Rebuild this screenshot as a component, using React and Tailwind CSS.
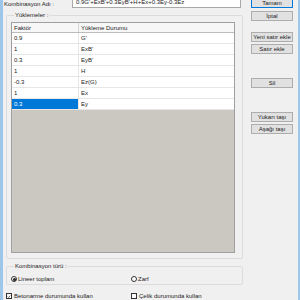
import React from "react";

const rows = [
  { f: "0.9", d: "G'" },
  { f: "1", d: "ExB'" },
  { f: "0.3", d: "EyB'" },
  { f: "1", d: "H" },
  { f: "-0.3", d: "Ez(G)" },
  { f: "1", d: "Ex" },
  { f: "0.3", d: "Ey", selected: true },
];

function Btn({ children, primary, className = "" }) {
  return (
    <div
      className={`h-[10px] w-[42px] flex items-center justify-center whitespace-nowrap bg-[#e1e1e1] border ${
        primary ? "border-[#0078d7]" : "border-[#adadad]"
      } text-[6px] leading-[7px] ${className}`}
    >
      {children}
    </div>
  );
}

function Radio({ checked, label }) {
  return (
    <div className="flex items-center gap-[1px]">
      <div className="w-[6px] h-[6px] rounded-full border border-[#333] bg-white flex items-center justify-center">
        {checked && <div className="w-[3px] h-[3px] rounded-full bg-[#222]" />}
      </div>
      <span>{label}</span>
    </div>
  );
}

function Check({ checked, label }) {
  return (
    <div className="flex items-center gap-[2px]">
      <div className="w-[6px] h-[6px] border border-[#333] bg-white flex items-center justify-center">
        {checked && (
          <svg viewBox="0 0 6 6" className="w-[5px] h-[5px]">
            <path d="M1 3 L2.5 4.5 L5 1.5" stroke="#222" strokeWidth="1" fill="none" />
          </svg>
        )}
      </div>
      <span>{label}</span>
    </div>
  );
}

export default function App() {
  return (
    <div className="w-[300px] h-[300px] overflow-hidden flex bg-[#f0f0f0] font-['Liberation_Sans',Arial,sans-serif] text-[6px] leading-[8px] text-[#222]">
      <div className="w-[3px] h-full bg-[#9cc6ea]" />
      <div className="flex-1 flex pl-[3px]">
        {/* left column */}
        <div className="w-[237px] flex flex-col mt-[-4px]">
          <div className="flex items-center h-[12px]">
            <span className="ml-[-2px] w-[68px] pt-[3px] whitespace-nowrap">Kombinasyon Adı :</span>
            <div className="w-[169px] h-[12px] bg-white border border-[#a9a9a9] flex items-end pl-[3px] pb-[1px]">
              <span className="leading-[7px] whitespace-nowrap">0.9G'+ExB'+0.3EyB'+H+Ex+0.3Ey-0.3Ez</span>
            </div>
          </div>

          <fieldset className="mt-[3px] border border-[#dcdcdc] rounded-[2px] px-[4px] pb-[5px] pr-[7px]">
            <legend className="ml-[3px] px-[1px] leading-[8px]">Yüklemeler :</legend>
            <div className="mt-[3px] h-[231px] border border-[#a0a0a0] bg-[#cbc8c1] flex flex-col">
              <div className="flex h-[10px] bg-[#f7f7f7] border-b border-[#bcbcbc]">
                <div className="w-[67px] pl-[2px] border-r border-[#d5d5d5] flex items-center">Faktör</div>
                <div className="flex-1 pl-[2px] flex items-center">Yükleme Durumu</div>
              </div>
              {rows.map((r, i) => (
                <div key={i} className="flex h-[11px] bg-white border-b border-[#e6e6e6]">
                  <div
                    className={`w-[67px] pl-[2px] flex items-center border-r border-[#e6e6e6] ${
                      r.selected ? "bg-[#0078d7] text-white" : ""
                    }`}
                  >
                    {r.f}
                  </div>
                  <div className="flex-1 pl-[2px] flex items-center">{r.d}</div>
                </div>
              ))}
            </div>
          </fieldset>

          <fieldset className="mt-[3px] h-[26px] border border-[#dcdcdc] rounded-[2px] px-[4px]">
            <legend className="ml-[3px] px-[1px] leading-[8px]">Kombinasyon türü :</legend>
            <div className="flex mt-[5px]">
              <div className="w-[120px]">
                <Radio checked label="Lineer toplam" />
              </div>
              <Radio label="Zarf" />
            </div>
          </fieldset>

          <div className="flex mt-[7px]">
            <div className="w-[125px]">
              <Check checked label="Betonarme durumunda kullan" />
            </div>
            <Check label="Çelik durumunda kullan" />
          </div>
        </div>

        {/* right column */}
        <div className="ml-[8px] flex flex-col mt-[-2px]">
          <Btn primary>Tamam</Btn>
          <Btn className="mt-[3px]">İptal</Btn>
          <Btn className="mt-[11px]">Yeni satır ekle</Btn>
          <Btn className="mt-[2px]">Satır ekle</Btn>
          <Btn className="mt-[24px]">Sil</Btn>
          <Btn className="mt-[24px]">Yukarı taşı</Btn>
          <Btn className="mt-[2px]">Aşağı taşı</Btn>
        </div>
      </div>
      <div className="w-[2px] h-full bg-[#9cc6ea]" />
    </div>
  );
}
